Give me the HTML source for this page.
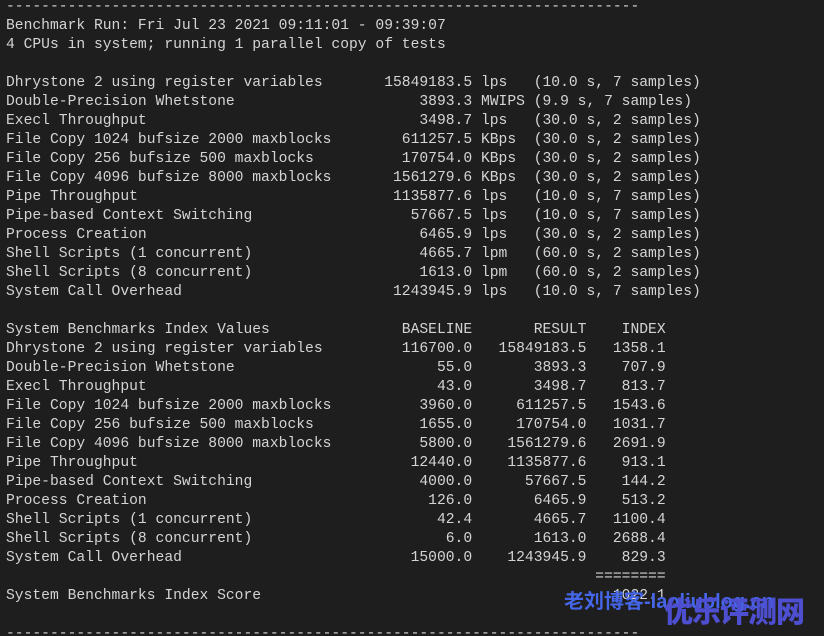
<!DOCTYPE html>
<html><head><meta charset="utf-8"><style>
html,body{margin:0;padding:0;background:#1e1e1e;width:824px;height:636px;overflow:hidden;position:relative}
pre{margin:0;position:absolute;left:6px;top:-2.5px;font-family:"Liberation Mono",monospace;font-size:14.67px;line-height:19px;color:#d4d4d4;white-space:pre}
.w1{position:absolute;left:564px;top:585px;font-family:"Liberation Sans","Noto Sans CJK SC",sans-serif;font-weight:bold;font-size:20px;color:#4566e8;white-space:nowrap}
.w2{position:absolute;left:664px;top:589px;font-family:"Noto Sans CJK SC",sans-serif;font-weight:900;font-size:29px;color:#4d4fd0;white-space:nowrap;letter-spacing:-1px}
</style></head><body>
<pre>------------------------------------------------------------------------
Benchmark Run: Fri Jul 23 2021 09:11:01 - 09:39:07
4 CPUs in system; running 1 parallel copy of tests

Dhrystone 2 using register variables       15849183.5 lps   (10.0 s, 7 samples)
Double-Precision Whetstone                     3893.3 MWIPS (9.9 s, 7 samples)
Execl Throughput                               3498.7 lps   (30.0 s, 2 samples)
File Copy 1024 bufsize 2000 maxblocks        611257.5 KBps  (30.0 s, 2 samples)
File Copy 256 bufsize 500 maxblocks          170754.0 KBps  (30.0 s, 2 samples)
File Copy 4096 bufsize 8000 maxblocks       1561279.6 KBps  (30.0 s, 2 samples)
Pipe Throughput                             1135877.6 lps   (10.0 s, 7 samples)
Pipe-based Context Switching                  57667.5 lps   (10.0 s, 7 samples)
Process Creation                               6465.9 lps   (30.0 s, 2 samples)
Shell Scripts (1 concurrent)                   4665.7 lpm   (60.0 s, 2 samples)
Shell Scripts (8 concurrent)                   1613.0 lpm   (60.0 s, 2 samples)
System Call Overhead                        1243945.9 lps   (10.0 s, 7 samples)

System Benchmarks Index Values               BASELINE       RESULT    INDEX
Dhrystone 2 using register variables         116700.0   15849183.5   1358.1
Double-Precision Whetstone                       55.0       3893.3    707.9
Execl Throughput                                 43.0       3498.7    813.7
File Copy 1024 bufsize 2000 maxblocks          3960.0     611257.5   1543.6
File Copy 256 bufsize 500 maxblocks            1655.0     170754.0   1031.7
File Copy 4096 bufsize 8000 maxblocks          5800.0    1561279.6   2691.9
Pipe Throughput                               12440.0    1135877.6    913.1
Pipe-based Context Switching                   4000.0      57667.5    144.2
Process Creation                                126.0       6465.9    513.2
Shell Scripts (1 concurrent)                     42.4       4665.7   1100.4
Shell Scripts (8 concurrent)                      6.0       1613.0   2688.4
System Call Overhead                          15000.0    1243945.9    829.3
                                                                   ========
System Benchmarks Index Score                                        1022.1

------------------------------------------------------------------------</pre>
<div class="w1">老刘博客-laoliublog.cn</div>
<div class="w2">优乐评测网</div>
</body></html>
